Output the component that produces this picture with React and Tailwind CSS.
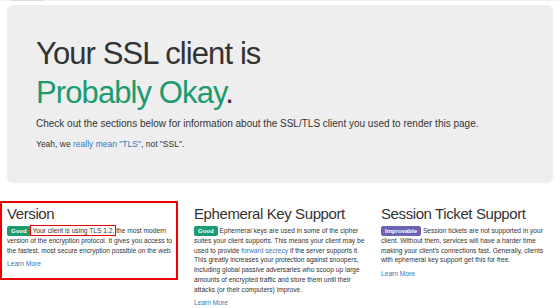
export default function App() {
  return (
    <div className="min-h-screen bg-white font-['Liberation_Sans',Arial,sans-serif] text-[#333]">
      {/* navbar edge */}
      <div className="flex h-px bg-[#f1f1f1]">
        <div className="ml-[11px] w-[32px] bg-[#dcdcdc]" />
      </div>

      <div className="mx-[7px] mt-[4px]">
        {/* jumbotron */}
        <div className="rounded-[6px] bg-[#eeeeee] pl-[29px] pt-[29px] pb-[32px]">
          <h1 className="text-[31px] leading-[39px] tracking-[-0.9px]">
            <span className="block">Your SSL client is</span>
            <span className="block">
              <span className="text-[#1b9b6f]">Probably Okay</span>.
            </span>
          </h1>
          <p className="mt-[4.7px] text-[10px] leading-[14.7px]">
            Check out the sections below for information about the SSL/TLS client you used to render this page.
          </p>
          <p className="mt-[7px] text-[8.5px] leading-[12.6px]">
            Yeah, we <a className="text-[#337ab7]">really mean "TLS"</a>, not "SSL".
          </p>
        </div>

        {/* cards */}
        <div className="mt-[23.5px] grid grid-cols-3 gap-x-[15px]">
          <div className="relative">
            <div className="pointer-events-none absolute -left-[7px] -top-[5px] h-[79px] w-[178px] border-2 border-[#ee0000]" />
            <h2 className="text-[15px] leading-[16.5px] tracking-[-0.4px]">Version</h2>
            <p className="mt-[3px] whitespace-nowrap text-[6.65px] leading-[9.7px]">
              <span className="inline-block rounded-[2px] bg-[#1b9b6f] px-[4px] pt-[1.5px] pb-[2px] text-[6px] font-bold leading-none text-white">Good</span>{" "}
              <span className="outline-[1.5px] outline-solid outline-offset-[1px] outline-[#ee0000]">Your client is using TLS 1.2,</span> the most modern
              <br />
              version of the encryption protocol. It gives you access to
              <br />
              the fastest, most secure encryption possible on the web.
            </p>
            <a className="mt-[3.5px] block text-[6.65px] leading-[9.7px] text-[#337ab7]">Learn More</a>
          </div>

          <div>
            <h2 className="text-[15px] leading-[16.5px] tracking-[-0.4px]">Ephemeral Key Support</h2>
            <p className="mt-[3px] whitespace-nowrap text-[6.65px] leading-[9.7px]">
              <span className="inline-block rounded-[2px] bg-[#1b9b6f] px-[4px] pt-[1.5px] pb-[2px] text-[6px] font-bold leading-none text-white">Good</span>{" "}
              Ephemeral keys are used in some of the cipher
              <br />
              suites your client supports. This means your client may be
              <br />
              used to provide <a className="text-[#337ab7]">forward secrecy</a> if the server supports it.
              <br />
              This greatly increases your protection against snoopers,
              <br />
              including global passive adversaries who scoop up large
              <br />
              amounts of encrypted traffic and store them until their
              <br />
              attacks (or their computers) improve.
            </p>
            <a className="mt-[3.5px] block text-[6.65px] leading-[9.7px] text-[#337ab7]">Learn More</a>
          </div>

          <div>
            <h2 className="text-[15px] leading-[16.5px] tracking-[-0.4px]">Session Ticket Support</h2>
            <p className="mt-[3px] whitespace-nowrap text-[6.65px] leading-[9.7px]">
              <span className="inline-block rounded-[2px] bg-[#6e62b4] px-[4px] pt-[1.5px] pb-[2px] text-[6px] font-bold leading-none text-white">Improvable</span>{" "}
              Session tickets are not supported in your
              <br />
              client. Without them, services will have a harder time
              <br />
              making your client's connections fast. Generally, clients
              <br />
              with ephemeral key support get this for free.
            </p>
            <a className="mt-[3.5px] block text-[6.65px] leading-[9.7px] text-[#337ab7]">Learn More</a>
          </div>
        </div>
      </div>
    </div>
  );
}
